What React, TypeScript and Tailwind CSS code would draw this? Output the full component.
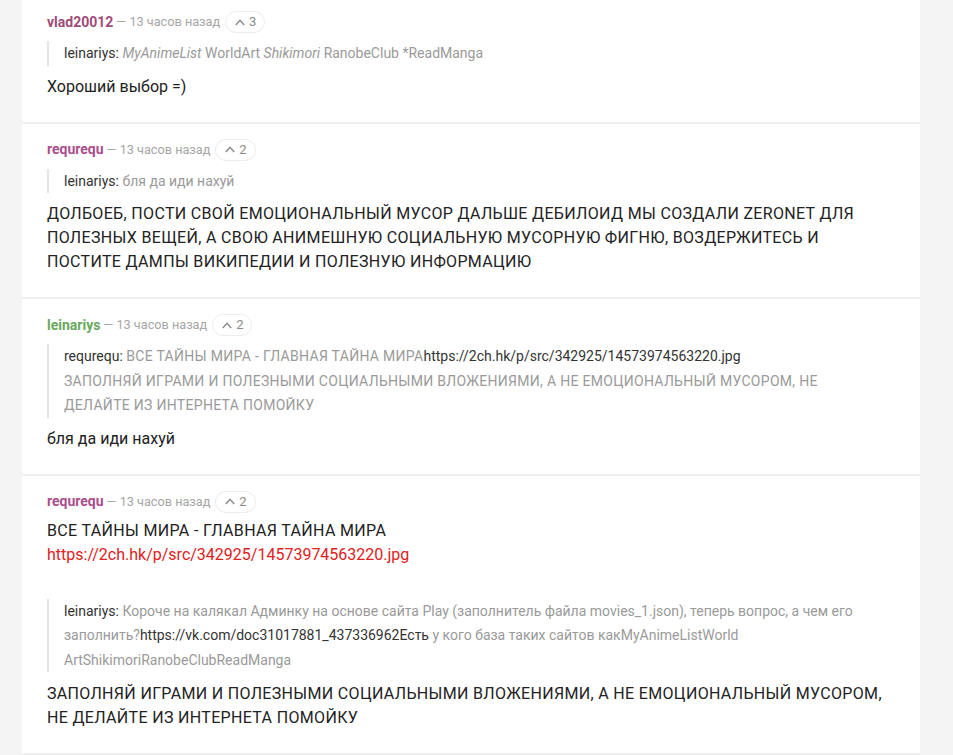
import React from 'react';

interface Comment {
  user: string;
  color: string;
  votes: number;
  quote?: React.ReactNode;
  body: React.ReactNode;
}

const Q = ({ children, caps }: { children: React.ReactNode; caps?: boolean }) => (
  <span className={caps ? 'tracking-[0.3px] text-[#9a9a9a]' : 'text-[#9a9a9a]'}>{children}</span>
);

const comments: Comment[] = [
  {
    user: 'vlad20012',
    color: 'text-[#a04c79]',
    votes: 3,
    quote: (
      <>
        leinariys: <Q><i>MyAnimeList</i> WorldArt <i>Shikimori</i> RanobeClub *ReadManga</Q>
      </>
    ),
    body: <p>Хороший выбор =)</p>,
  },
  {
    user: 'requrequ',
    color: 'text-[#aa4e8c]',
    votes: 2,
    quote: (
      <>
        leinariys: <Q>бля да иди нахуй</Q>
      </>
    ),
    body: (
      <p className="tracking-[0.33px]">
        ДОЛБОЕБ, ПОСТИ СВОЙ ЕМОЦИОНАЛЬНЫЙ МУСОР ДАЛЬШЕ ДЕБИЛОИД МЫ СОЗДАЛИ ZERONET ДЛЯ ПОЛЕЗНЫХ ВЕЩЕЙ, А СВОЮ
        АНИМЕШНУЮ СОЦИАЛЬНУЮ МУСОРНУЮ ФИГНЮ, ВОЗДЕРЖИТЕСЬ И ПОСТИТЕ ДАМПЫ ВИКИПЕДИИ И ПОЛЕЗНУЮ ИНФОРМАЦИЮ
      </p>
    ),
  },
  {
    user: 'leinariys',
    color: 'text-[#67a95c]',
    votes: 2,
    quote: (
      <>
        requrequ: <Q caps>ВСЕ ТАЙНЫ МИРА - ГЛАВНАЯ ТАЙНА МИРА</Q>https://2ch.hk/p/src/342925/14573974563220.jpg
        <br />
        <Q caps>ЗАПОЛНЯЙ ИГРАМИ И ПОЛЕЗНЫМИ СОЦИАЛЬНЫМИ ВЛОЖЕНИЯМИ, А НЕ ЕМОЦИОНАЛЬНЫЙ МУСОРОМ, НЕ ДЕЛАЙТЕ ИЗ ИНТЕРНЕТА ПОМОЙКУ</Q>
      </>
    ),
    body: <p>бля да иди нахуй</p>,
  },
];

const VoteButton = ({ votes }: { votes: number }) => (
  <span className="ml-[5px] inline-flex h-[22px] items-center gap-[4px] rounded-full border border-[#ececec] pl-[9px] pr-[8px] text-[13px] text-[#8a8a8a]">
    <svg width="10" height="7" viewBox="0 0 10 7" fill="none" stroke="#8a8a8a" strokeWidth="1.4">
      <path d="M0.8 6 L5 1.4 L9.2 6" />
    </svg>
    {votes}
  </span>
);

const Header = ({ user, color, votes }: { user: string; color: string; votes: number }) => (
  <div className="flex h-[24px] items-center">
    <span className={`text-[14px] font-bold ${color}`}>{user}</span>
    <span className="ml-[3px] text-[12.7px] text-[#a6a6a6]">— 13 часов назад</span>
    <VoteButton votes={votes} />
  </div>
);

const Quote = ({ children }: { children: React.ReactNode }) => (
  <blockquote className="mt-[7px] mr-[40px] border-l-2 border-[#e4e4e4] pl-[15px] text-[14px] leading-[24.5px] text-[#333]">
    {children}
  </blockquote>
);

export default function App() {
  return (
    <div
      className="min-h-screen bg-[#f4f4f4] pl-[22px] pr-[33px]"
      style={{ fontFamily: 'Roboto, "Noto Sans", sans-serif' }}
    >
      <div className="-mt-[4px] bg-white">
        {comments.map((c, i) => (
          <div key={i} className="border-b-2 border-[#efefef] px-[25px] pt-[14px] pb-[23px]">
            <Header user={c.user} color={c.color} votes={c.votes} />
            {c.quote && <Quote>{c.quote}</Quote>}
            <div className="mt-[9px] text-[16px] leading-[24px] text-[#222]">{c.body}</div>
          </div>
        ))}
        <div className="border-b-2 border-[#efefef] px-[25px] pt-[14px] pb-[23px]">
          <Header user="requrequ" color="text-[#aa4e8c]" votes={2} />
          <div className="mt-[5px] text-[16px] leading-[24px] text-[#222]">
            <p className="tracking-[0.33px]">ВСЕ ТАЙНЫ МИРА - ГЛАВНАЯ ТАЙНА МИРА</p>
            <p className="text-[#e0201b]">https://2ch.hk/p/src/342925/14573974563220.jpg</p>
          </div>
          <blockquote className="mt-[32px] mr-[40px] border-l-2 border-[#e4e4e4] pl-[15px] text-[14px] leading-[24.5px] text-[#333]">
            leinariys:{' '}
            <Q>
              Короче на калякал Админку на основе сайта Play (заполнитель файла movies_1.json), теперь вопрос, а чем его
              заполнить?
            </Q>
            https://vk.com/doc31017881_437336962Есть<Q> у кого база таких сайтов какMyAnimeListWorld ArtShikimoriRanobeClubReadManga</Q>
          </blockquote>
          <div className="mt-[10px] text-[16px] leading-[24px] text-[#222]">
            <p className="tracking-[0.33px]">
              ЗАПОЛНЯЙ ИГРАМИ И ПОЛЕЗНЫМИ СОЦИАЛЬНЫМИ ВЛОЖЕНИЯМИ, А НЕ ЕМОЦИОНАЛЬНЫЙ МУСОРОМ, НЕ ДЕЛАЙТЕ ИЗ ИНТЕРНЕТА ПОМОЙКУ
            </p>
          </div>
        </div>
        <div className="h-[40px]" />
      </div>
    </div>
  );
}
